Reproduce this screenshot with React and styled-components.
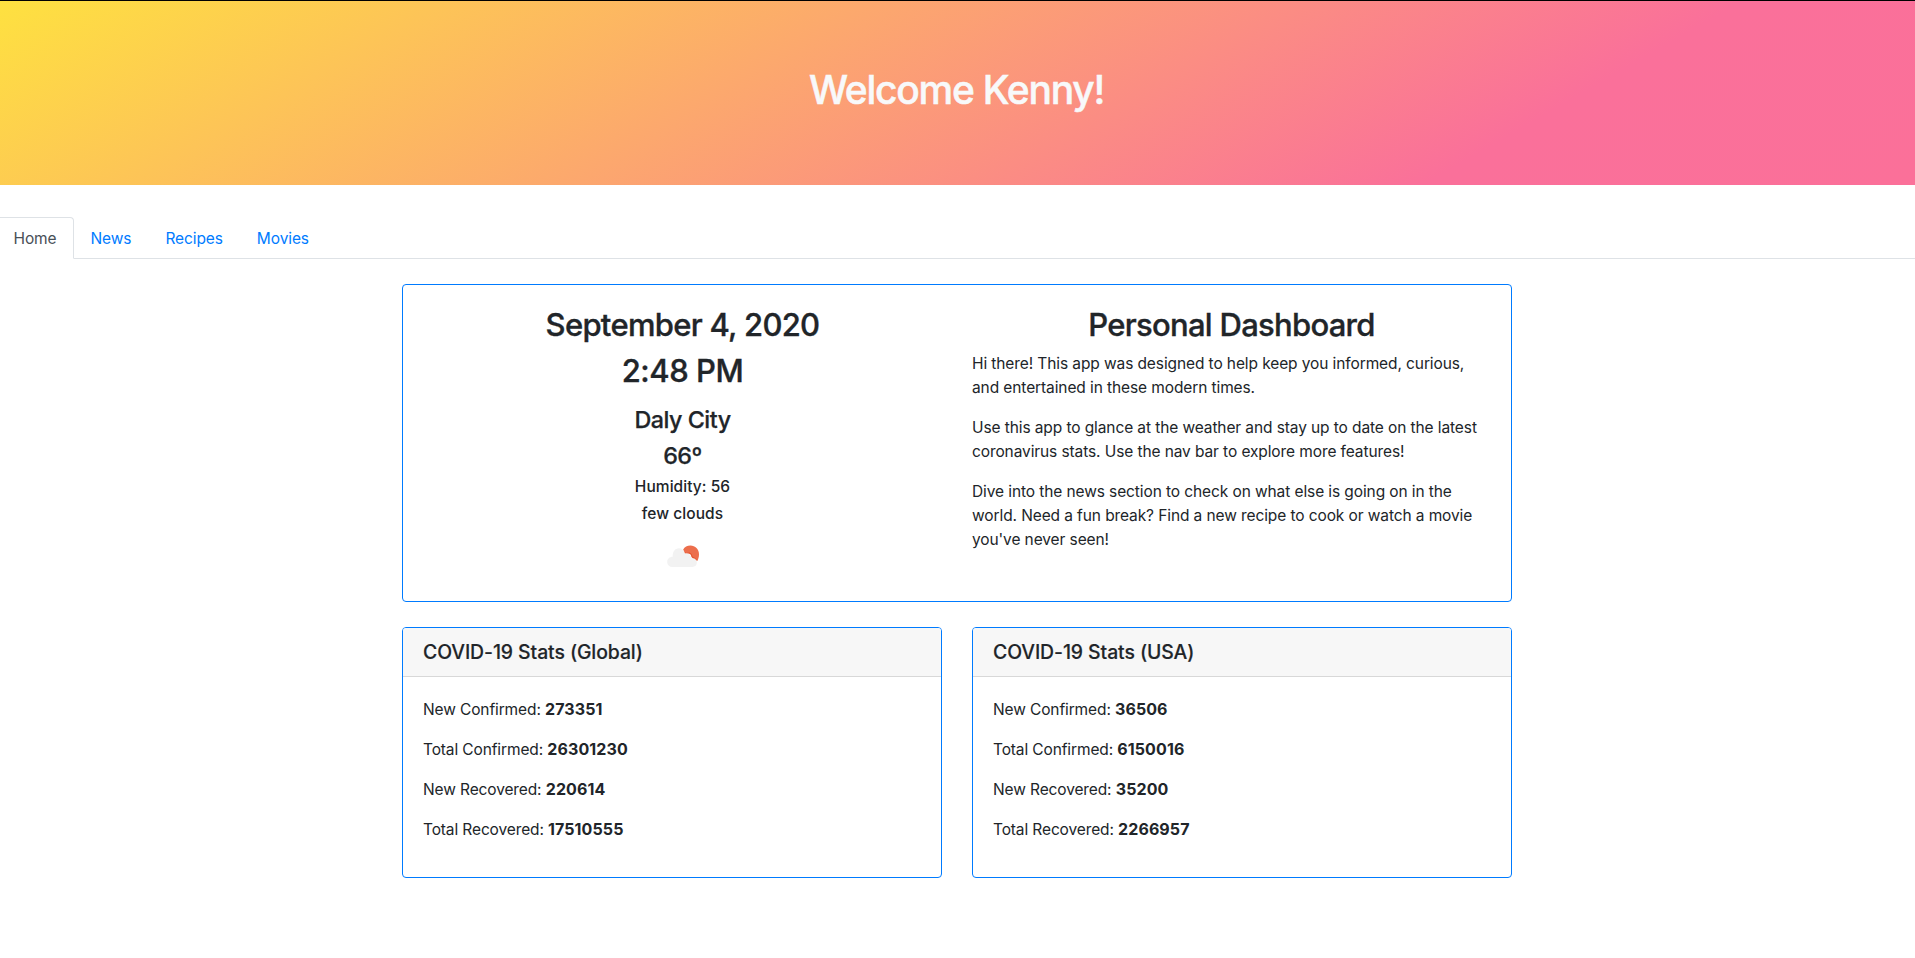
import React from "react";
import styled, { createGlobalStyle } from "styled-components";

const GlobalStyle = createGlobalStyle`
  *, *::before, *::after { box-sizing: border-box; }
  html, body { margin: 0; height: 100%; overflow: hidden; background: #fff; }
  body {
    font-family: Inter, "Liberation Sans", sans-serif;
    font-size: 15.5px;
    line-height: 24px;
    letter-spacing: -0.1px;
    color: #212529;
    font-feature-settings: "calt" 0;
  }
  p, h1, h2, h4, h5, h6 { margin: 0; }
`;

const Page = styled.div`
  border-top: 1px solid #000;
  height: 958px;
  overflow: hidden;
`;

const Jumbotron = styled.header`
  height: 184px;
  padding: 65px 34px 63px 32px;
  text-align: center;
  background: linear-gradient(150deg, #fee140 0%, #fa709a 78%, #fb7099 100%);
`;

const Welcome = styled.h1`
  font-size: 39px;
  line-height: 48px;
  font-weight: 500;
  letter-spacing: -1.25px;
  -webkit-text-stroke: 0.5px currentColor;
  color: #f8f9fa;
`;

const Tabs = styled.nav`
  display: flex;
  margin: 32px 0 25px;
  border-bottom: 1px solid #dee2e6;
`;

const Tab = styled.a`
  height: 42px;
  padding: 9px 16px 7px;
  margin-bottom: -1px;
  border: 1px solid transparent;
  border-radius: 4px 4px 0 0;
  color: #007bff;
  text-decoration: none;

  &:first-child { margin-left: -3.5px; }

  ${({ $active }) =>
    $active &&
    `
    color: #495057;
    background: #fff;
    border-color: #dee2e6 #dee2e6 #fff;
  `}
`;

const Container = styled.main`
  width: 1110px;
  margin-left: calc(50% - 555.5px);
`;

const Card = styled.section`
  border: 1px solid #007bff;
  border-radius: 4px;
  background: #fff;
  overflow: hidden;
`;

const Overview = styled(Card)`
  display: grid;
  grid-template-columns: 1fr 1fr;
  column-gap: 30px;
  height: 318px;
  padding: 20px;
  margin-bottom: 25px;
`;

const Weather = styled.div`
  display: flex;
  flex-direction: column;
  align-items: center;
`;

const Heading = styled.h2`
  font-size: 31px;
  line-height: 38.4px;
  font-weight: 500;
  letter-spacing: ${({ $tracking }) => $tracking || "-0.71px"};
  -webkit-text-stroke: 0.35px currentColor;
  padding-top: 1px;
  margin-bottom: 7px;
  text-align: center;
`;

const About = styled.div`
  white-space: nowrap;

  ${Heading} { margin-bottom: 8px; }
`;

const City = styled.h4`
  font-size: 23.3px;
  line-height: 28.8px;
  font-weight: 500;
  letter-spacing: -0.47px;
  -webkit-text-stroke: 0.25px currentColor;
  margin: ${({ $first }) => ($first ? "8px 0 7px" : "0 0 6.5px")};
`;

const Detail = styled.h6`
  font-size: 15.5px;
  line-height: 19.2px;
  font-weight: 500;
  letter-spacing: 0.05px;
  margin-bottom: 8px;
`;

const Paragraph = styled.p`
  margin-bottom: 16px;
`;

const Stats = styled.div`
  display: grid;
  grid-template-columns: 1fr 1fr;
  gap: 30px;
`;

const StatsCard = styled(Card)`
  height: 251px;
`;

const StatsHeader = styled.div`
  height: 49px;
  padding: 12px 20px;
  background: #f7f7f7;
  border-bottom: 1px solid #d8d8d8;
`;

const StatsTitle = styled.h5`
  font-size: 19.4px;
  line-height: 24px;
  font-weight: 500;
  letter-spacing: -0.08px;
  -webkit-text-stroke: 0.15px currentColor;
`;

const StatsBody = styled.div`
  padding: 21px 20px 20px;
  letter-spacing: -0.12px;
`;

const Value = styled.strong`
  font-size: 16px;
  line-height: 0;
  font-weight: 680;
  letter-spacing: 0.1px;
`;

const Cloud = styled.svg`
  display: block;
`;

function FewClouds() {
  return (
    <Cloud width="50" height="50" viewBox="0 0 50 50" aria-label="few clouds">
      <path
        d="M25.2 18.6c1.3-2.4 4.1-4 7.2-4 4.9 0 8.6 3.7 8.6 8.6 0 2.6-.6 4.8-1.7 6.8l-2.8-1-2.6-2.2-1.4-3.2-2.2-1-3.2 1.8Z"
        fill="#ec6e4c"
      />
      <path
        d="M27.2 21.6l1 .9 3.2-.6 1.8 1 1.1 3.2 2.4.9 1.6 2"
        fill="none"
        stroke="#e2552f"
        strokeWidth="0.9"
      />
      <path
        d="M14.2 36a5 5 0 0 1-5-5.1c0-2.9 2.3-5.1 5.5-5.1-.2-5 2.3-8.5 6.2-8.5 3 0 5.3 2 6 5.2 3.5-.8 6.2 1.4 6.5 4.8 3.3-.5 5.5 1.4 5.5 4.3 0 2.6-1.9 4.4-4.6 4.4Z"
        fill="#f2f2f2"
      />
    </Cloud>
  );
}

const tabs = ["Home", "News", "Recipes", "Movies"];

const regions = [
  {
    title: "COVID-19 Stats (Global)",
    rows: [
      ["New Confirmed", "273351"],
      ["Total Confirmed", "26301230"],
      ["New Recovered", "220614"],
      ["Total Recovered", "17510555"],
    ],
  },
  {
    title: "COVID-19 Stats (USA)",
    rows: [
      ["New Confirmed", "36506"],
      ["Total Confirmed", "6150016"],
      ["New Recovered", "35200"],
      ["Total Recovered", "2266957"],
    ],
  },
];

export default function App() {
  return (
    <>
      <GlobalStyle />
      <Page>
        <Jumbotron>
          <Welcome>Welcome Kenny!</Welcome>
        </Jumbotron>
        <Tabs>
          {tabs.map((name, i) => (
            <Tab key={name} href="#" $active={i === 0}>
              {name}
            </Tab>
          ))}
        </Tabs>
        <Container>
          <Overview>
            <Weather>
              <Heading>September 4, 2020</Heading>
              <Heading $tracking="-0.45px">2:48 PM</Heading>
              <City $first>Daly City</City>
              <City>66º</City>
              <Detail>Humidity: 56</Detail>
              <Detail>few clouds</Detail>
              <FewClouds />
            </Weather>
            <About>
              <Heading>Personal Dashboard</Heading>
              <Paragraph>
                Hi there! This app was designed to help keep you informed, curious,
                <br />
                and entertained in these modern times.
              </Paragraph>
              <Paragraph>
                Use this app to glance at the weather and stay up to date on the latest
                <br />
                coronavirus stats. Use the nav bar to explore more features!
              </Paragraph>
              <Paragraph>
                Dive into the news section to check on what else is going on in the
                <br />
                world. Need a fun break? Find a new recipe to cook or watch a movie
                <br />
                you've never seen!
              </Paragraph>
            </About>
          </Overview>
          <Stats>
            {regions.map(({ title, rows }) => (
              <StatsCard key={title}>
                <StatsHeader>
                  <StatsTitle>{title}</StatsTitle>
                </StatsHeader>
                <StatsBody>
                  {rows.map(([label, value]) => (
                    <Paragraph key={label}>
                      {label}: <Value>{value}</Value>
                    </Paragraph>
                  ))}
                </StatsBody>
              </StatsCard>
            ))}
          </Stats>
        </Container>
      </Page>
    </>
  );
}
